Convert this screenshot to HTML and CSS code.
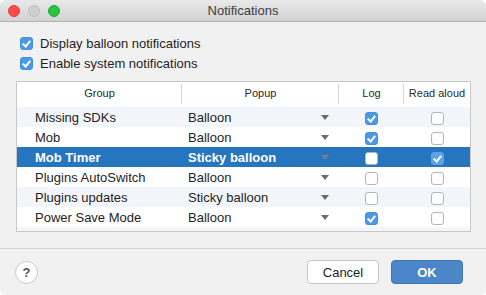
FILE: index.html
```html
<!DOCTYPE html>
<html lang="en">
<head>
    <meta charset="UTF-8">
    <title>Notifications</title>
    <link rel="stylesheet" href="styles.css">
</head>
<body>
    <div class="window">
        <div class="titlebar">
            <div class="lights">
                <span class="light red"></span>
                <span class="light gray"></span>
                <span class="light green"></span>
            </div>
            <div class="title">Notifications</div>
        </div>

        <div class="content">
            <label class="option"><span class="cb on"></span>Display balloon notifications</label>
            <label class="option"><span class="cb on"></span>Enable system notifications</label>

            <div class="table-box">
                <table class="grid">
                    <colgroup>
                        <col class="c-group"><col class="c-popup"><col class="c-log"><col class="c-read">
                    </colgroup>
                    <thead>
                        <tr><th>Group</th><th>Popup</th><th>Log</th><th>Read aloud</th></tr>
                    </thead>
                    <tbody>
                        <tr class="alt">
                            <td class="name">Missing SDKs</td>
                            <td><div class="popup">Balloon<span class="arrow"></span></div></td>
                            <td><span class="cb on"></span></td>
                            <td><span class="cb"></span></td>
                        </tr>
                        <tr>
                            <td class="name">Mob</td>
                            <td><div class="popup">Balloon<span class="arrow"></span></div></td>
                            <td><span class="cb on"></span></td>
                            <td><span class="cb"></span></td>
                        </tr>
                        <tr class="selected">
                            <td class="name">Mob Timer</td>
                            <td><div class="popup">Sticky balloon<span class="arrow"></span></div></td>
                            <td><span class="cb"></span></td>
                            <td><span class="cb on"></span></td>
                        </tr>
                        <tr>
                            <td class="name">Plugins AutoSwitch</td>
                            <td><div class="popup">Balloon<span class="arrow"></span></div></td>
                            <td><span class="cb"></span></td>
                            <td><span class="cb"></span></td>
                        </tr>
                        <tr class="alt">
                            <td class="name">Plugins updates</td>
                            <td><div class="popup">Sticky balloon<span class="arrow"></span></div></td>
                            <td><span class="cb"></span></td>
                            <td><span class="cb"></span></td>
                        </tr>
                        <tr>
                            <td class="name">Power Save Mode</td>
                            <td><div class="popup">Balloon<span class="arrow"></span></div></td>
                            <td><span class="cb on"></span></td>
                            <td><span class="cb"></span></td>
                        </tr>
                        <tr class="alt filler"><td colspan="4"></td></tr>
                    </tbody>
                </table>
            </div>
        </div>

        <div class="footer">
            <button class="help">?</button>
            <div class="actions">
                <button class="btn">Cancel</button>
                <button class="btn primary">OK</button>
            </div>
        </div>
    </div>
</body>
</html>
```

FILE: styles.css
```css
* { box-sizing: border-box; }
html, body { margin: 0; padding: 0; background: #ffffff; }
body { font-family: "Liberation Sans", Arial, sans-serif; font-size: 13px; color: #1e1e1e; }

.window { width: 486px; height: 295px; background: #f1f1f1; border-radius: 6px; overflow: hidden; display: flex; flex-direction: column; }

/* title bar */
.titlebar { height: 22px; display: flex; align-items: center; position: relative; background: linear-gradient(#e9e9e9, #d2d2d2); border-bottom: 1px solid #b3b3b3; }
.lights { display: flex; gap: 8px; padding-left: 8px; }
.light { width: 12px; height: 12px; border-radius: 50%; display: block; }
.light.red { background: #fd4d4b; border: 1px solid #e0403d; }
.light.gray { background: #cfcfcf; border: 1px solid #bdbdbd; }
.light.green { background: #2ac23f; border: 1px solid #20a933; }
.title { position: absolute; left: 0; right: 0; text-align: center; color: #3d3d3d; font-size: 13px; pointer-events: none; }

/* content */
.content { padding: 11px 16px 0 20px; }
.option { display: flex; align-items: center; height: 20px; gap: 7px; }

.cb { width: 13px; height: 13px; border-radius: 3px; background: #ffffff; border: 1px solid #b5b5b5; display: inline-block; position: relative; vertical-align: middle; }
.cb.on { background: #4c9ae6; border-color: #4290dc; }
.cb.on::after { content: ""; position: absolute; left: 3px; top: 1px; width: 3px; height: 6px; border: solid #ffffff; border-width: 0 2px 2px 0; transform: rotate(40deg); }

.table-box { margin: 8px 0 0 -4px; width: 455px; height: 151px; border: 1px solid #c8c8c8; background: #ffffff; overflow: hidden; }
.grid { width: 453px; border-collapse: collapse; table-layout: fixed; }
.c-group { width: 165px; }
.c-popup { width: 157px; }
.c-log { width: 65px; }
.c-read { width: 66px; }

.grid th { height: 25px; font-weight: normal; font-size: 11px; color: #2a2a2a; text-align: center; padding: 0 0 3px; position: relative; }
.grid th:not(:last-child)::after { content: ""; position: absolute; right: 0; top: 2px; bottom: 3px; width: 1px; background: #d6d6d6; }

.grid td { height: 20px; padding: 0; text-align: center; }
.grid td.name { text-align: left; padding-left: 18px; }
.grid tr.alt td { background: #f2f5fa; }
.grid tr.filler td { height: 10px; }
.grid tr.selected td { background: #2675bf; color: #ffffff; font-weight: bold; }

.popup { display: flex; align-items: center; justify-content: space-between; padding: 0 10px 0 6px; text-align: left; }
.arrow { width: 0; height: 0; border-left: 4px solid transparent; border-right: 4px solid transparent; border-top: 5px solid #6b6b6b; }
.selected .arrow { border-top-color: #6b7f95; }
.selected .cb.on { background: #5ba4ea; border-color: #5ba4ea; }

/* footer */
.footer { margin-top: 16px; border-top: 1px solid #d0d0d0; display: flex; align-items: center; justify-content: space-between; padding: 11px 23px 0 15px; }
.help { width: 23px; height: 23px; border-radius: 50%; border: 1px solid #c9c9c9; background: #ffffff; font: bold 13px "Liberation Sans", Arial, sans-serif; color: #555555; padding: 0; }
.actions { display: flex; gap: 12px; }
.btn { width: 72px; height: 24px; border-radius: 4px; border: 1px solid #c6c6c6; background: #ffffff; font: 13px "Liberation Sans", Arial, sans-serif; color: #1e1e1e; padding: 0; }
.btn.primary { background: #4a86c8; border-color: #3f77b5; color: #ffffff; font-weight: bold; }
```
